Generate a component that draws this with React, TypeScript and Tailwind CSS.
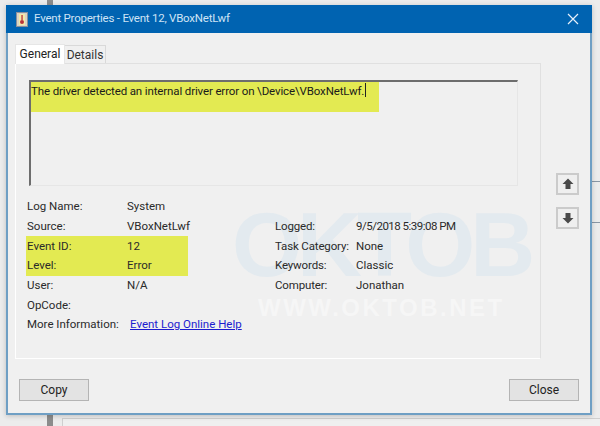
const F = "font-['Roboto','Liberation_Sans',sans-serif]";

function Row({ a, b }: { a: string; b?: string }) {
  return (
    <div className="flex h-[19.7px] items-center">
      <span className="w-[100px] shrink-0">{a}</span>
      <span>{b}</span>
    </div>
  );
}

function Row2({ a, b, tight }: { a: string; b: string; tight?: boolean }) {
  return (
    <div className="flex h-[19.7px] items-center">
      <span className="w-[81px] shrink-0 tracking-[-0.15px]">{a}</span>
      <span className={tight ? "tracking-[-0.5px]" : ""}>{b}</span>
    </div>
  );
}

function Arrow({ down }: { down?: boolean }) {
  return (
    <button className="flex h-[22px] w-[23px] items-center justify-center border-2 border-[#cbcbcb] bg-[#efefef]">
      <svg width="12" height="12" viewBox="0 0 12 12" className={down ? "rotate-180" : ""}>
        <path d="M6 0.5 L11.5 6 H8.5 V11 H3.5 V6 H0.5 Z" fill="#4a4a4a" />
      </svg>
    </button>
  );
}

function Btn({ label }: { label: string }) {
  return (
    <button className="flex h-[22px] w-[70px] items-center justify-center border border-[#b4b4b4] bg-[#e3e3e3] text-[12px] text-[#222]">
      {label}
    </button>
  );
}

export default function App() {
  return (
    <div className={`${F} relative h-[426px] w-[600px] overflow-hidden bg-[#ececec] text-[11.5px] text-[#2a2a2a]`}>
      <div className="absolute left-[47px] top-0 h-[426px] w-[6px] bg-[#8c8c8c]" />
      <div className="absolute left-[62px] top-[418px] h-[8px] w-[538px] border-l border-t border-[#cfcfcf] bg-[#efefef]" />
      <div className="absolute left-[590px] top-[181px] h-px w-[10px] bg-[#8a97a5]" />
      <div className="absolute left-[590px] top-[222px] h-px w-[10px] bg-[#8a97a5]" />
      <div className="relative ml-[6px] mt-[5px] flex h-[410px] w-[586px] flex-col border-x-2 border-b-2 border-[#6f9fc4] bg-[#f0f0f0] shadow-[0_1px_5px_rgba(0,0,0,0.2)]">
        <div className="-mx-[2px] flex h-[28px] shrink-0 items-center bg-[#0063b1] pl-[10px] pr-[10px]">
          <svg width="12" height="15" viewBox="0 0 12 15" className="shrink-0">
            <rect x="0.5" y="0.5" width="11" height="14" fill="#d9d4c4" stroke="#8a8f9a" />
            <rect x="3" y="2" width="6" height="11" fill="#f3e9a8" />
            <circle cx="6" cy="10" r="2" fill="#b8323a" />
            <rect x="5.4" y="3" width="1.3" height="5" fill="#b8323a" />
          </svg>
          <span className="ml-[6px] whitespace-nowrap text-[11.5px] tracking-[-0.23px] text-[#cfe3f5]">Event Properties - Event 12, VBoxNetLwf</span>
          <svg width="12" height="12" viewBox="0 0 12 12" className="ml-auto mr-[3px]">
            <path d="M1 1 L11 11 M11 1 L1 11" stroke="#e6f0f9" strokeWidth="1.2" />
          </svg>
        </div>

        <div className="flex min-h-0 flex-1 flex-col pl-[7px] pr-[10px] pt-[10px]">
          <div className="flex flex-1 gap-[15px]">
            <div className="flex w-[526px] flex-col">
              <div className="z-10 flex h-[20px] items-end">
                <div className="-mb-px flex h-[20px] w-[50px] items-center justify-center border-x border-t border-[#e6e6e6] bg-white pb-[2px] text-[12px] text-[#222]">General</div>
                <div className="flex h-[18px] w-[41px] items-center justify-center border-r border-t border-[#d9d9d9] bg-[#f0f0f0] text-[12px] text-[#333]">Details</div>
              </div>
              <div className="relative h-[296px] border border-[#e0e0e0] border-b-white border-l-white pl-[11px] pt-[16px]">
                <div className="absolute left-[216px] top-[136px] whitespace-nowrap font-['Liberation_Sans',sans-serif] text-[90px] font-bold leading-none tracking-[-5px] text-[#e3eaef]">OKTOB</div>
                <div className="absolute left-[242px] top-[232px] whitespace-nowrap font-['Liberation_Sans',sans-serif] text-[24px] font-bold leading-none tracking-[2.5px] text-[#f6f6f6]">WWW.OKTOB.NET</div>
                <div className="relative ml-[2px] h-[106px] w-[489px] border-b border-l-2 border-r border-t-2 border-[#6d6d6d] border-b-[#e6e6e6] border-r-[#e6e6e6]">
                  <div className="flex h-[30px] w-[348px] items-start whitespace-nowrap bg-[#e3ea52] pt-px text-[11.5px] leading-[16px] tracking-[-0.13px] text-[#1a1a1a]">
                    The driver detected an internal driver error on \Device\VBoxNetLwf.
                    <span className="ml-[1px] h-[14px] w-px bg-[#222]" />
                  </div>
                </div>
                <div className="relative mt-[11px] flex">
                  <div className="w-[248px]">
                    <Row a="Log Name:" b="System" />
                    <Row a="Source:" b="VBoxNetLwf" />
                    <div className="-ml-[1px] w-[162px] bg-[#e3ea52] pl-[1px]">
                      <Row a="Event ID:" b="12" />
                      <Row a="Level:" b="Error" />
                    </div>
                    <Row a="User:" b="N/A" />
                    <Row a="OpCode:" />
                    <div className="flex h-[19.7px] items-center">
                      <span className="w-[103px] shrink-0">More Information:</span>
                      <a className="text-[#1c1ccf] underline">Event Log Online Help</a>
                    </div>
                  </div>
                  <div className="pt-[19.7px]">
                    <Row2 a="Logged:" b="9/5/2018 5:39:08 PM" tight />
                    <Row2 a="Task Category:" b="None" />
                    <Row2 a="Keywords:" b="Classic" />
                    <Row2 a="Computer:" b="Jonathan" />
                  </div>
                </div>
              </div>
            </div>
            <div className="flex flex-col gap-[12px] pt-[130px]">
              <Arrow />
              <Arrow down />
            </div>
          </div>
          <div className="flex h-[55px] shrink-0 items-start justify-between pl-[4px] pr-[1px] pt-[20px]">
            <Btn label="Copy" />
            <Btn label="Close" />
          </div>
        </div>
      </div>
    </div>
  );
}
